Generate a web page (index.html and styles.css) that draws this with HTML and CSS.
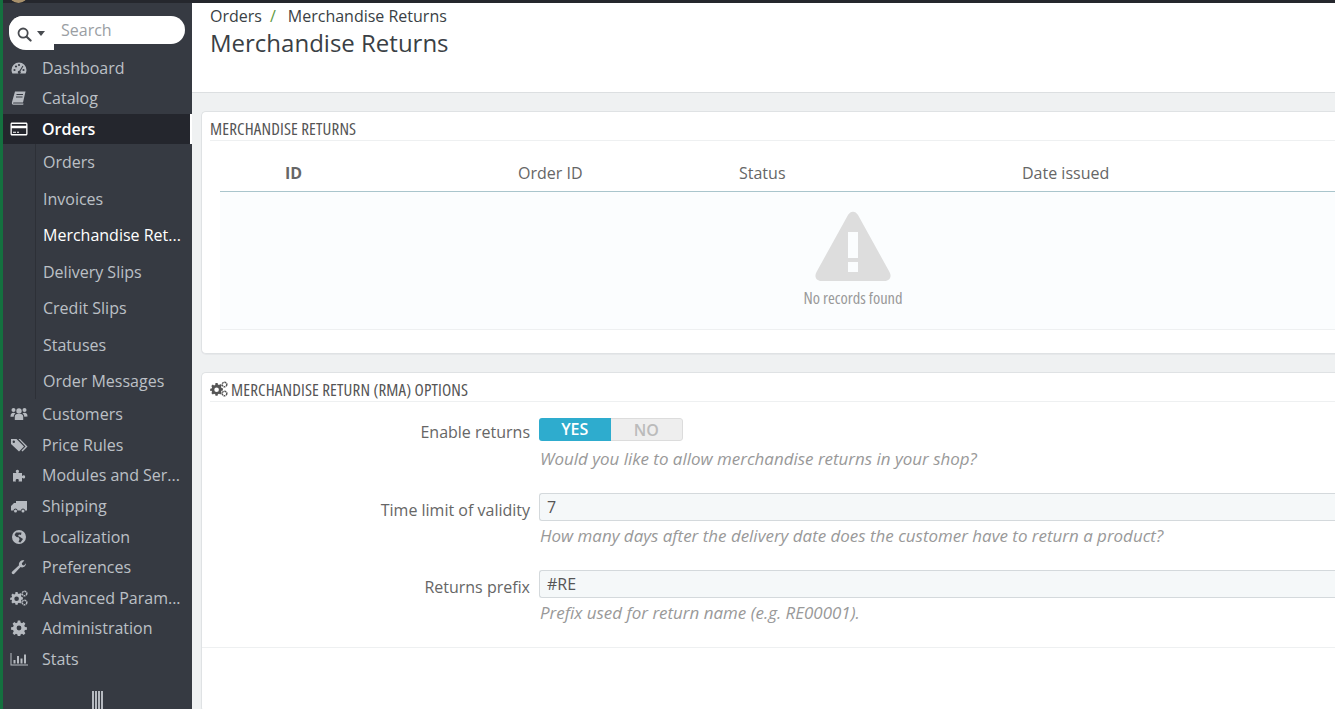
FILE: index.html
```html
<!DOCTYPE html>
<html lang="en">
<head>
<meta charset="utf-8">
<title>Merchandise Returns</title>
<link rel="stylesheet" href="styles.css">
</head>
<body>
<div class="topbar"><span class="avatar"></span></div>
<div class="layout">
  <nav class="sidebar">
    <div class="search">
      <span class="search-btn">
        <svg class="search-glass" viewBox="0 0 16 16"><circle cx="6.5" cy="6.5" r="4.9" fill="none" stroke="#484b50" stroke-width="1.9"/><path d="M10.300 10.300l4.200 4.200" stroke="#484b50" stroke-width="2.300" stroke-linecap="round"/></svg>
        <span class="caret"></span>
      </span>
      <span class="search-input">Search</span>
    </div>
    <ul class="menu">
      <li class="item"><svg class="ico" viewBox="0 0 16 16"><path d="M8 2.5A7.5 7.5 0 0 0 .5 10c0 1.300.3 2.400.9 3.500h13.200c.6-1.100.9-2.200.9-3.500A7.500 7.500 0 0 0 8 2.500z"/><g fill="#373b43"><circle cx="3.500" cy="10" r="1.100"/><circle cx="5" cy="6.500" r="1.100"/><circle cx="8" cy="5" r="1.100"/><circle cx="12.500" cy="10" r="1.100"/><path d="M11.500 5.800l.9.500-3 5a1.500 1.500 0 1 1-1-.5z"/></g></svg>Dashboard</li>
      <li class="item"><svg class="ico" viewBox="0 0 16 16"><path d="M4 1.500h10.500l-2.500 11H3c-.8 0-1 .5-.9 1h10.400l-.3 1.200H2.500C1 14.700.6 13.500 1 12z"/><path d="M5.500 4.500h6.500M5 7h6.500" stroke="#373b43" stroke-width="1"/></svg>Catalog</li>
      <li class="item active"><svg class="ico" viewBox="0 0 18 16"><path fill-rule="evenodd" d="M2 1.500h14c.8 0 1.500.7 1.500 1.500v10c0 .8-.7 1.500-1.500 1.500H2C1.200 14.500.5 13.800.5 13V3c0-.8.7-1.500 1.500-1.500zM1.800 3v1.800h14.400V3zm0 4.200V13h14.400V7.200zM3 10.800h3v1H3zm4 0h2v1H7z"/></svg>Orders</li>
      <li class="subwrap">
        <ul class="submenu">
          <li class="sub">Orders</li>
          <li class="sub">Invoices</li>
          <li class="sub current">Merchandise Ret...</li>
          <li class="sub">Delivery Slips</li>
          <li class="sub">Credit Slips</li>
          <li class="sub">Statuses</li>
          <li class="sub">Order Messages</li>
        </ul>
      </li>
      <li class="item"><svg class="ico" viewBox="0 0 18 16"><circle cx="9" cy="5" r="2.700"/><circle cx="3.500" cy="4" r="2"/><circle cx="14.500" cy="4" r="2"/><path d="M4.800 14V10.500C4.800 9 6 8 7 8h4c1 0 2.200 1 2.200 2.500V14zM.5 10.500C.5 8 1.500 6.800 3.500 6.800c.8 0 1.500.2 2 .7-1 .7-1.800 1.700-1.800 3.200H.5zM17.500 10.500c0-2.500-1-3.700-3-3.700-.8 0-1.500.2-2 .7 1 .7 1.800 1.700 1.800 3.200z"/></svg>Customers</li>
      <li class="item"><svg class="ico" viewBox="0 0 18 16"><path fill-rule="evenodd" d="M1 2h5.500l7.500 7.500-5 5L1 7zm2.800 1.500a1.200 1.200 0 1 0 0 2.400 1.200 1.200 0 0 0 0-2.400z"/><path d="M8.500 2h1.500l7.500 7.500-5 5-1-1 4-4z"/></svg>Price Rules</li>
      <li class="item"><svg class="ico" viewBox="0 0 16 16"><path d="M2 6h3.500c-.8-1-.8-1.800-.5-2.500.4-.9 2.400-.9 2.800 0 .3.700.3 1.500-.5 2.500H11v3c1-.8 1.800-.8 2.500-.5.900.4.900 2.400 0 2.800-.7.300-1.500.3-2.500-.5v3.700H7.500c.5-1 .4-1.800-.2-2.200-.7-.5-1.800-.4-2.300.1-.5.600-.4 1.300.1 2.100H2z"/></svg>Modules and Ser...</li>
      <li class="item"><svg class="ico" viewBox="0 0 18 16"><path d="M6 3h11v9.500h-2a2 2 0 0 0-4 0H7.500a2 2 0 0 0-4 0H1V8l3-3h2z"/><circle cx="5.500" cy="13" r="1.500"/><circle cx="13" cy="13" r="1.500"/></svg>Shipping</li>
      <li class="item"><svg class="ico" viewBox="0 0 16 16"><path fill-rule="evenodd" d="M8 1a7 7 0 1 1 0 14A7 7 0 0 1 8 1zM5 3.500 3.500 6l2 2 2.500.500.500 2-1 2.500 2 .500 2.500-3.500L9 8 7 7l1-1.500 2 .5.500-2.500z"/></svg>Localization</li>
      <li class="item"><svg class="ico" viewBox="0 0 16 16"><path d="M15 4.200c.1 2.300-1.800 4.300-4 4.200-.5 0-1-.1-1.400-.3l-6.100 6.500c-.7.700-1.700.7-2.300.1-.7-.7-.6-1.700.1-2.300L8 6.300C7.400 4 9.200 1.200 12 1.200c.5 0 1 .1 1.400.3L10.800 4.200l.5 1.700 1.700.5z"/></svg>Preferences</li>
      <li class="item"><svg class="ico" viewBox="0 0 18 16"><path fill-rule="evenodd" d="M4.900 3.500h2.100l.3 1.400 1.200.5 1.200-.8 1.500 1.500-.8 1.200.5 1.200 1.400.3v2.100l-1.400.3-.5 1.200.8 1.200-1.500 1.500-1.200-.8-1.200.5-.3 1.400H4.900l-.3-1.400-1.200-.5-1.200.8-1.500-1.500.8-1.200-.5-1.200L-.4 11.400V9.300l1.400-.3.500-1.200-.8-1.200 1.500-1.500 1.200.8 1.200-.5zM6 8a2.300 2.300 0 1 0 0 4.600A2.300 2.300 0 0 0 6 8z" transform="translate(.6 -1.500)"/><circle cx="14.500" cy="3.500" r="2.300" fill="none" stroke="currentColor" stroke-width="1.500" stroke-dasharray="1.800 .6"/><circle cx="14.500" cy="12.500" r="2.300" fill="none" stroke="currentColor" stroke-width="1.500" stroke-dasharray="1.800 .6"/></svg>Advanced Param...</li>
      <li class="item"><svg class="ico" viewBox="0 0 16 16"><path fill-rule="evenodd" d="M6.800 1h2.400l.4 2 1.400.6 1.700-1.100 1.700 1.700-1.100 1.700.6 1.400 2 .4v2.400l-2 .4-.6 1.400 1.100 1.700-1.700 1.700-1.700-1.100-1.400.6-.4 2H6.800l-.4-2-1.400-.6-1.700 1.100-1.700-1.700 1.100-1.700-.6-1.400-2-.4V7.700l2-.4.600-1.400-1.100-1.700 1.700-1.700L5 3.600 6.400 3zM8 6a2.400 2.400 0 1 0 0 4.800A2.400 2.400 0 0 0 8 6z" transform="translate(0 -.4)"/></svg>Administration</li>
      <li class="item"><svg class="ico" viewBox="0 0 18 16"><path d="M.5 2h1v11.500H18v1H.5zM3.500 9h2v3.500h-2zM7 5h2v7.500H7zM10.500 7.500h2v5h-2zM14 3.500h2v9h-2z"/></svg>Stats</li>
    </ul>
    <div class="collapse"><span></span><span></span><span></span><span></span></div>
  </nav>

  <main class="content">
    <header class="page-head">
      <div class="crumbs"><span>Orders</span><span class="slash">/</span><span>Merchandise Returns</span></div>
      <h1>Merchandise Returns</h1>
    </header>

    <section class="panel panel-list">
      <h2 class="panel-title">MERCHANDISE RETURNS</h2>
      <div class="table">
        <div class="thead">
          <span class="th-id">ID</span>
          <span>Order ID</span>
          <span>Status</span>
          <span>Date issued</span>
        </div>
        <div class="empty">
          <svg class="warn" viewBox="0 0 76 70"><path fill-rule="evenodd" d="M33 4c2.500-4.500 7.500-4.500 10 0l31.500 57c2.500 4.500.5 9-5 9h-63c-5.500 0-7.500-4.500-5-9zM33 21v26h10V21zM33 51v10h10V51z"/></svg>
          <p>No records found</p>
        </div>
      </div>
    </section>

    <section class="panel panel-form">
      <h2 class="panel-title"><svg class="title-ico" viewBox="0 0 18 16"><path fill-rule="evenodd" d="M4.900 3.500h2.100l.3 1.400 1.200.5 1.200-.8 1.500 1.500-.8 1.200.5 1.200 1.400.3v2.100l-1.400.3-.5 1.200.8 1.200-1.500 1.500-1.200-.8-1.200.5-.3 1.400H4.900l-.3-1.400-1.200-.5-1.200.8-1.500-1.500.8-1.200-.5-1.200L-.4 11.400V9.300l1.400-.3.500-1.200-.8-1.200 1.500-1.500 1.200.8 1.200-.5zM6 8a2.300 2.300 0 1 0 0 4.600A2.300 2.300 0 0 0 6 8z" transform="translate(.6 -1.500)"/><circle cx="14.500" cy="3.500" r="2.300" fill="none" stroke="currentColor" stroke-width="1.500" stroke-dasharray="1.800 .6"/><circle cx="14.500" cy="12.500" r="2.300" fill="none" stroke="currentColor" stroke-width="1.500" stroke-dasharray="1.800 .6"/></svg>MERCHANDISE RETURN (RMA) OPTIONS</h2>
      <div class="form">
        <div class="row row-toggle">
          <label class="lbl lbl-toggle">Enable returns</label>
          <div class="field">
            <div class="toggle"><span class="yes">YES</span><span class="no">NO</span></div>
            <p class="help">Would you like to allow merchandise returns in your shop?</p>
          </div>
        </div>
        <div class="row">
          <label class="lbl">Time limit of validity</label>
          <div class="field">
            <div class="input">7</div>
            <p class="help">How many days after the delivery date does the customer have to return a product?</p>
          </div>
        </div>
        <div class="row">
          <label class="lbl">Returns prefix</label>
          <div class="field">
            <div class="input">#RE</div>
            <p class="help">Prefix used for return name (e.g. RE00001).</p>
          </div>
        </div>
      </div>
      <div class="panel-foot"></div>
    </section>
  </main>
</div>
</body>
</html>
```
FILE: styles.css
```css
* { box-sizing: border-box; }
html, body { margin: 0; padding: 0; height: 709px; overflow: hidden; }
body { font-family: "Open Sans", "Liberation Sans", sans-serif; color: #555; background: #eff1f2; border-left: 3px solid #14713f; }

ul { list-style: none; margin: 0; padding: 0; }
h1, h2, p { margin: 0; font-weight: 400; }

.topbar { height: 3px; background: #25272d; display: flex; overflow: hidden; }
.avatar { width: 19px; height: 19px; flex: none; margin: -16px 0 0 6px; border-radius: 50%; background: #a8916c; }
.layout { display: flex; height: 706px; }

/* sidebar */
.sidebar { width: 189px; flex: none; background: #363a42; font-size: 16px; color: #bcc0c6; }
.search { margin: 13px 7px 0 6px; height: 28px; display: flex; background: #fff; border-radius: 14px; }
.search-btn { width: 45px; height: 34px; flex: none; background: #fff; border-radius: 14px 0 0 17px; display: flex; align-items: center; padding: 0 0 6px 8px; gap: 5px; }
.search-glass { width: 15px; height: 15px; margin-top: 8px; }
.caret { border: 4.500px solid transparent; border-top: 5px solid #484b50; border-bottom: 0; margin-top: 7px; }
.search-input { font-size: 16px; color: #9a9ea3; line-height: 28px; padding-left: 7px; }
.menu { margin-top: 8.600px; }
.item { height: 30.6px; display: flex; align-items: center; white-space: nowrap; line-height: 30px; }
.ico { width: 18px; height: 16px; margin: 0 14px 0 7px; flex: none; fill: currentColor; color: #b6bac0; }
.item.active { background: #24262d; color: #fff; font-weight: 600; border-right: 2px solid #fff; }
.item.active .ico { color: #fff; }
.subwrap { padding: 0 0 0 32px; }
.submenu { border-left: 1px solid #2d3037; padding: 0 0 0 7px; margin-bottom: -.6px; }
.sub { height: 36.45px; line-height: 36.45px; white-space: nowrap; }
.sub.current { color: #fff; font-weight: 500; }
.collapse { display: flex; gap: 1px; justify-content: center; margin: 17px 0 0 0; }
.collapse span { width: 2px; height: 18px; background: #b6bac0; }

/* main */
.content { flex: 1; min-width: 0; overflow: hidden; }
.page-head { height: 90px; background: #fff; border-bottom: 1px solid #dcdfe1; padding: 3px 0 0 18px; color: #3a3f45; }
.crumbs { font-size: 16px; line-height: 20px; display: flex; gap: 8px; }
.slash { color: #5f9a45; margin-right: 4px; }
h1 { font-size: 24px; line-height: 32px; margin-top: 1px; }

.panel { background: #fff; border: 1px solid #dfe2e4; border-right: 0; border-radius: 5px 0 0 5px; margin-left: 9px; padding: 0 0 0 8px; box-shadow: 0 1px 0 #e6e8ea; }
.panel-list { margin-top: 18px; height: 243px; }
.panel-form { margin-top: 18px; height: 340px; }
.panel-title { height: 29px; padding-top: 4px; font-stretch: 75%; font-size: 17px; letter-spacing: .14px; color: #555; border-bottom: 1px solid #eef0f1; white-space: nowrap; display: flex; align-items: center; }
.title-ico { width: 18px; height: 16px; margin-right: 3px; fill: currentColor; color: #555; }

.table { margin-left: 10px; width: 1266px; }
.thead { display: grid; grid-template-columns: 233px 221px 283px 1fr; height: 51px; align-items: center; padding: 14px 0 0 65px; border-bottom: 1px solid #a9c5cc; font-size: 16px; color: #666; }
.th-id { font-weight: 700; }
.empty { height: 138px; background: #fbfdfe; border-bottom: 1px solid #eef0f1; display: flex; flex-direction: column; align-items: center; padding: 19px 0 0 0; }
.warn { width: 76px; height: 70px; fill: #dddddd; }
.empty p { font-stretch: 75%; font-size: 16.500px; color: #999; margin-top: 5px; }

.form { padding-top: 16px; }
.row { display: flex; margin-bottom: 23px; }
.lbl { width: 320px; flex: none; text-align: right; font-size: 16px; line-height: 34px; color: #666; }
.lbl-toggle { line-height: 28px; }
.field { flex: 1; margin-left: 9px; min-width: 0; }
.toggle { width: 144px; height: 23px; display: flex; font-size: 16px; font-weight: 600; line-height: 22px; text-align: center; border-radius: 3px; overflow: hidden; margin-bottom: 7px; }
.yes { flex: 1; background: #2eacce; color: #fff; }
.no { flex: 1; background: #eeeeee; color: #bbb; border: 1px solid #dcdcdc; border-left: 0; border-radius: 0 3px 3px 0; }
.help { font-size: 16.950px; font-style: italic; color: #999; line-height: 22px; white-space: nowrap; padding-left: 1px; }
.input { height: 28px; background: #f5f8f9; border: 1px solid #d4d9dc; border-right: 0; border-radius: 3px 0 0 3px; font-size: 16px; color: #555; line-height: 26px; padding-left: 7px; margin-bottom: 4px; }
.panel-foot { border-top: 1px solid #eef0f1; margin: 0 0 0 -8px; }
```
